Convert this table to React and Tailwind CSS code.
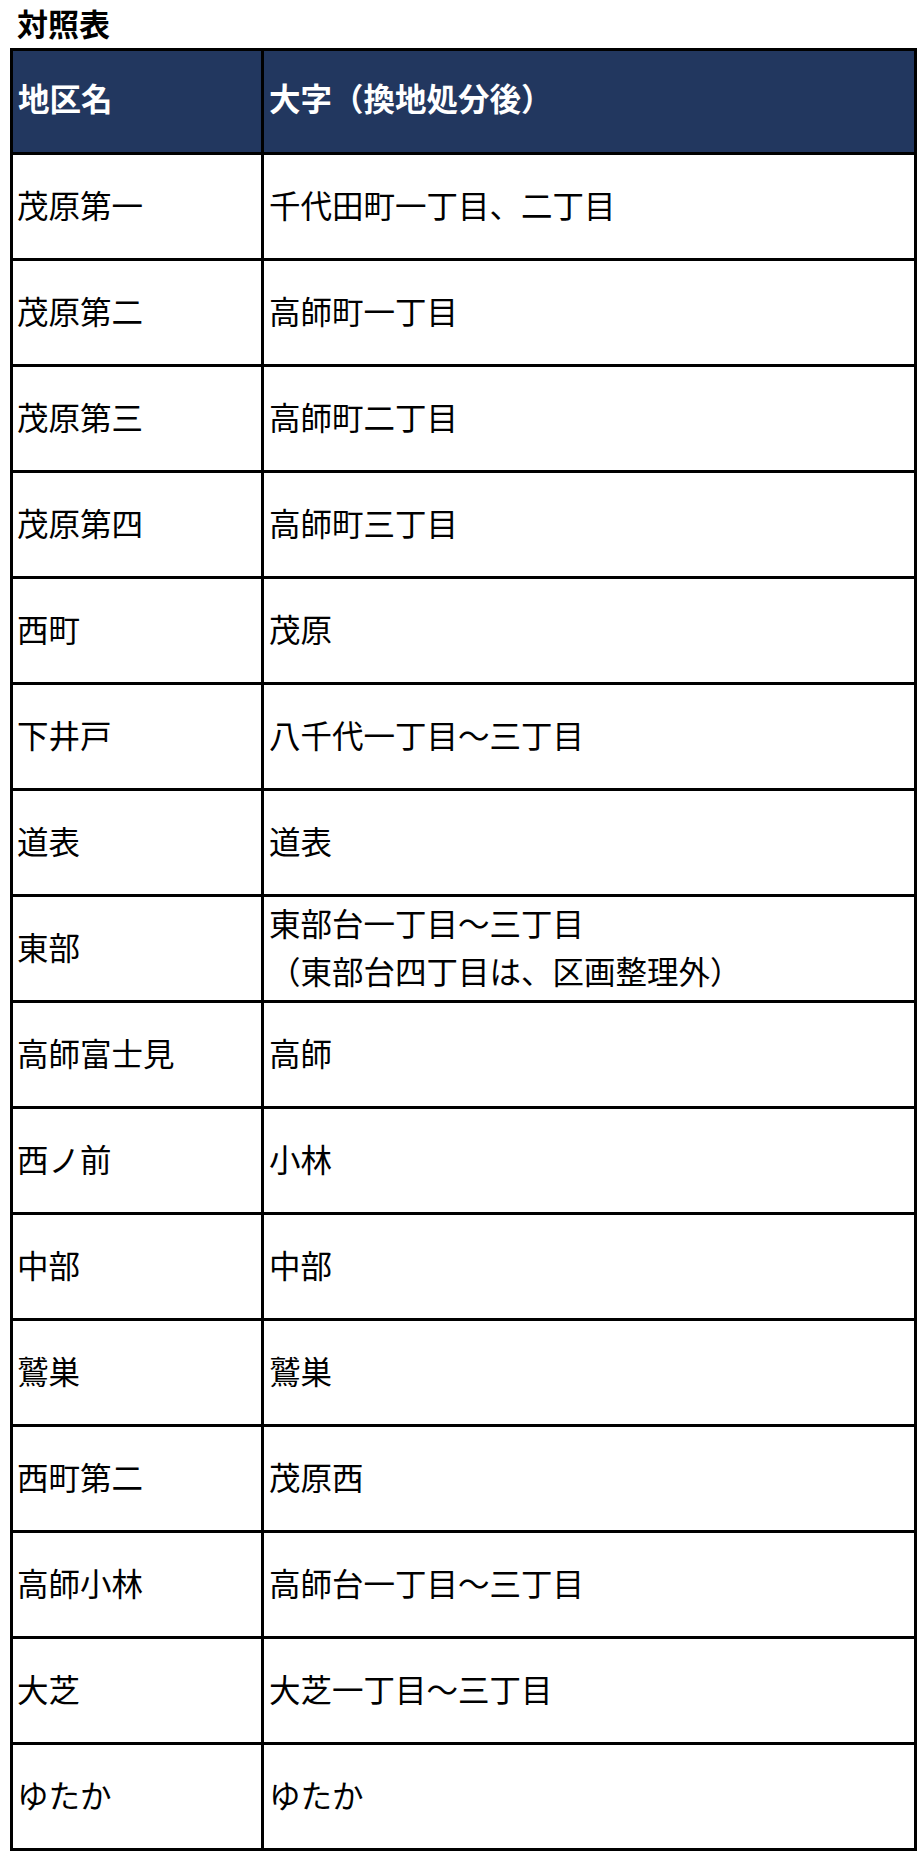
import React from "react";

const rows = [
  ["茂原第一", ["千代田町一丁目、二丁目"]],
  ["茂原第二", ["高師町一丁目"]],
  ["茂原第三", ["高師町二丁目"]],
  ["茂原第四", ["高師町三丁目"]],
  ["西町", ["茂原"]],
  ["下井戸", ["八千代一丁目～三丁目"]],
  ["道表", ["道表"]],
  ["東部", ["東部台一丁目～三丁目", "（東部台四丁目は、区画整理外）"]],
  ["高師富士見", ["高師"]],
  ["西ノ前", ["小林"]],
  ["中部", ["中部"]],
  ["鷲巣", ["鷲巣"]],
  ["西町第二", ["茂原西"]],
  ["高師小林", ["高師台一丁目～三丁目"]],
  ["大芝", ["大芝一丁目～三丁目"]],
  ["ゆたか", ["ゆたか"]],
];

export default function App() {
  return (
    <div
      className="w-[921px] min-h-[1856px] bg-white text-black"
      style={{ fontFamily: '"Noto Sans CJK JP", "Noto Sans", sans-serif' }}
    >
      <div className="h-[48px] pl-[17px] pb-[4px] flex items-center text-[31px] font-bold leading-none">
        対照表
      </div>
      <div className="ml-[10px] w-[907px] border-l-[3px] border-t-[3px] border-black">
        <div className="flex bg-[#22375f] text-white font-bold">
          <div className="w-[251px] h-[104px] border-r-[3px] border-b-[3px] border-black flex items-center pl-[5px] pb-[9px] text-[31.5px] leading-[48px]">
            地区名
          </div>
          <div className="flex-1 h-[104px] border-r-[3px] border-b-[3px] border-black flex items-center pl-[5px] pb-[9px] text-[31.5px] leading-[48px]">
            大字（換地処分後）
          </div>
        </div>
        {rows.map(([a, b], i) => (
          <div key={i} className="flex">
            <div className="w-[251px] h-[106px] border-r-[3px] border-b-[3px] border-black flex items-center pl-[4px] pb-[6px] text-[31.5px] leading-[48px]">
              {a}
            </div>
            <div className="flex-1 h-[106px] border-r-[3px] border-b-[3px] border-black flex flex-col justify-center pl-[5px] pb-[6px] text-[31.5px] leading-[48px]">
              {b.map((t, j) => (
                <div key={j}>{t}</div>
              ))}
            </div>
          </div>
        ))}
      </div>
    </div>
  );
}
